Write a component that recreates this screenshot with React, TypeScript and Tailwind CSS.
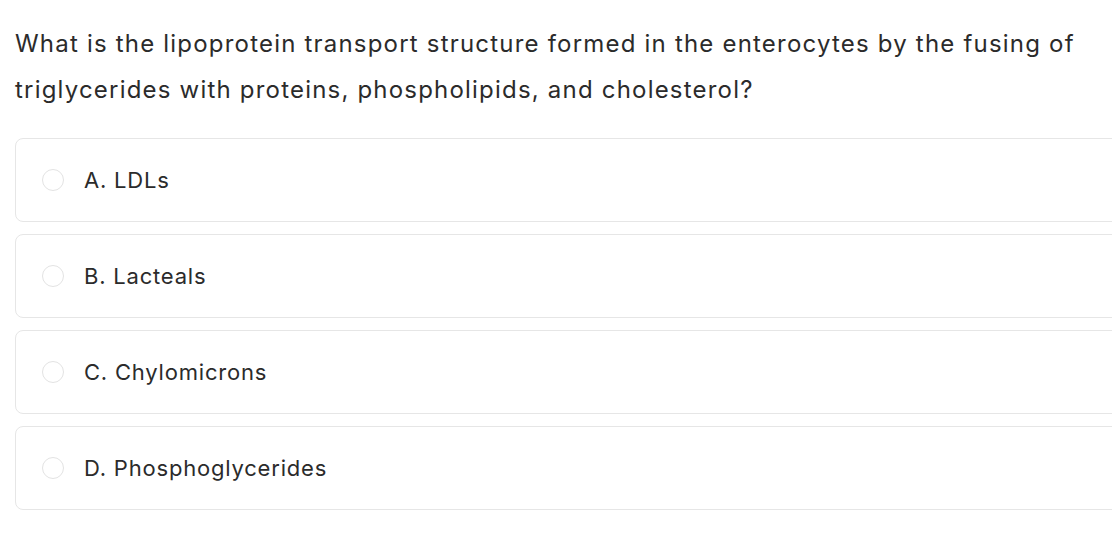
const options = ['A. LDLs', 'B. Lacteals', 'C. Chylomicrons', 'D. Phosphoglycerides']

export default function App() {
  return (
    <div className="w-[1112px] h-[534px] overflow-hidden bg-white text-[#2b2b2b] font-['Inter',sans-serif]">
      <div className="pl-[15px] pt-[21px]">
        {/* Question */}
        <p className="text-[24px] leading-[46px] tracking-[1.2px] w-[1090px]">
          What is the lipoprotein transport structure formed in the enterocytes by the fusing of triglycerides with proteins, phospholipids, and cholesterol?
        </p>

        {/* Answer choices */}
        <div className="mt-[25px] flex flex-col gap-[12px] w-[1120px]">
          {options.map((o) => (
            <div key={o} className="h-[84px] flex items-center border border-[#e6e6e6] rounded-lg pl-[26px]">
              <span className="w-[22px] h-[22px] rounded-full border border-[#e3e3e3]" />
              <span className="ml-[20px] text-[22px] tracking-[0.8px] text-[#2b2b2b]">{o}</span>
            </div>
          ))}
        </div>
      </div>
    </div>
  )
}
